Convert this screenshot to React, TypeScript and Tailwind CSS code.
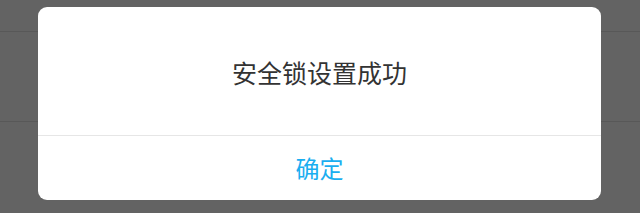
export default function App() {
  return (
    <div
      className="relative h-[213px] w-[640px] overflow-hidden bg-[#636363]"
      style={{ fontFamily: '"Noto Sans CJK SC", "Noto Sans", sans-serif' }}
    >
      {/* dimmed page behind the dialog */}
      <div className="flex flex-col">
        <div className="h-[32px] border-b border-[#585858]" />
        <div className="h-[90px] border-b border-[#585858]" />
      </div>

      <div className="absolute left-[38px] top-[7px] flex h-[193px] w-[563px] flex-col rounded-[9px] bg-white">
        <div className="flex h-[128px] items-center justify-center pt-[3px] text-[25px] text-[#333]">
          安全锁设置成功
        </div>
        <div className="h-px bg-[#e6e6e6]" />
        <button className="flex flex-1 items-center justify-center text-[24px] text-[#1aaef0]">
          确定
        </button>
      </div>
    </div>
  )
}
